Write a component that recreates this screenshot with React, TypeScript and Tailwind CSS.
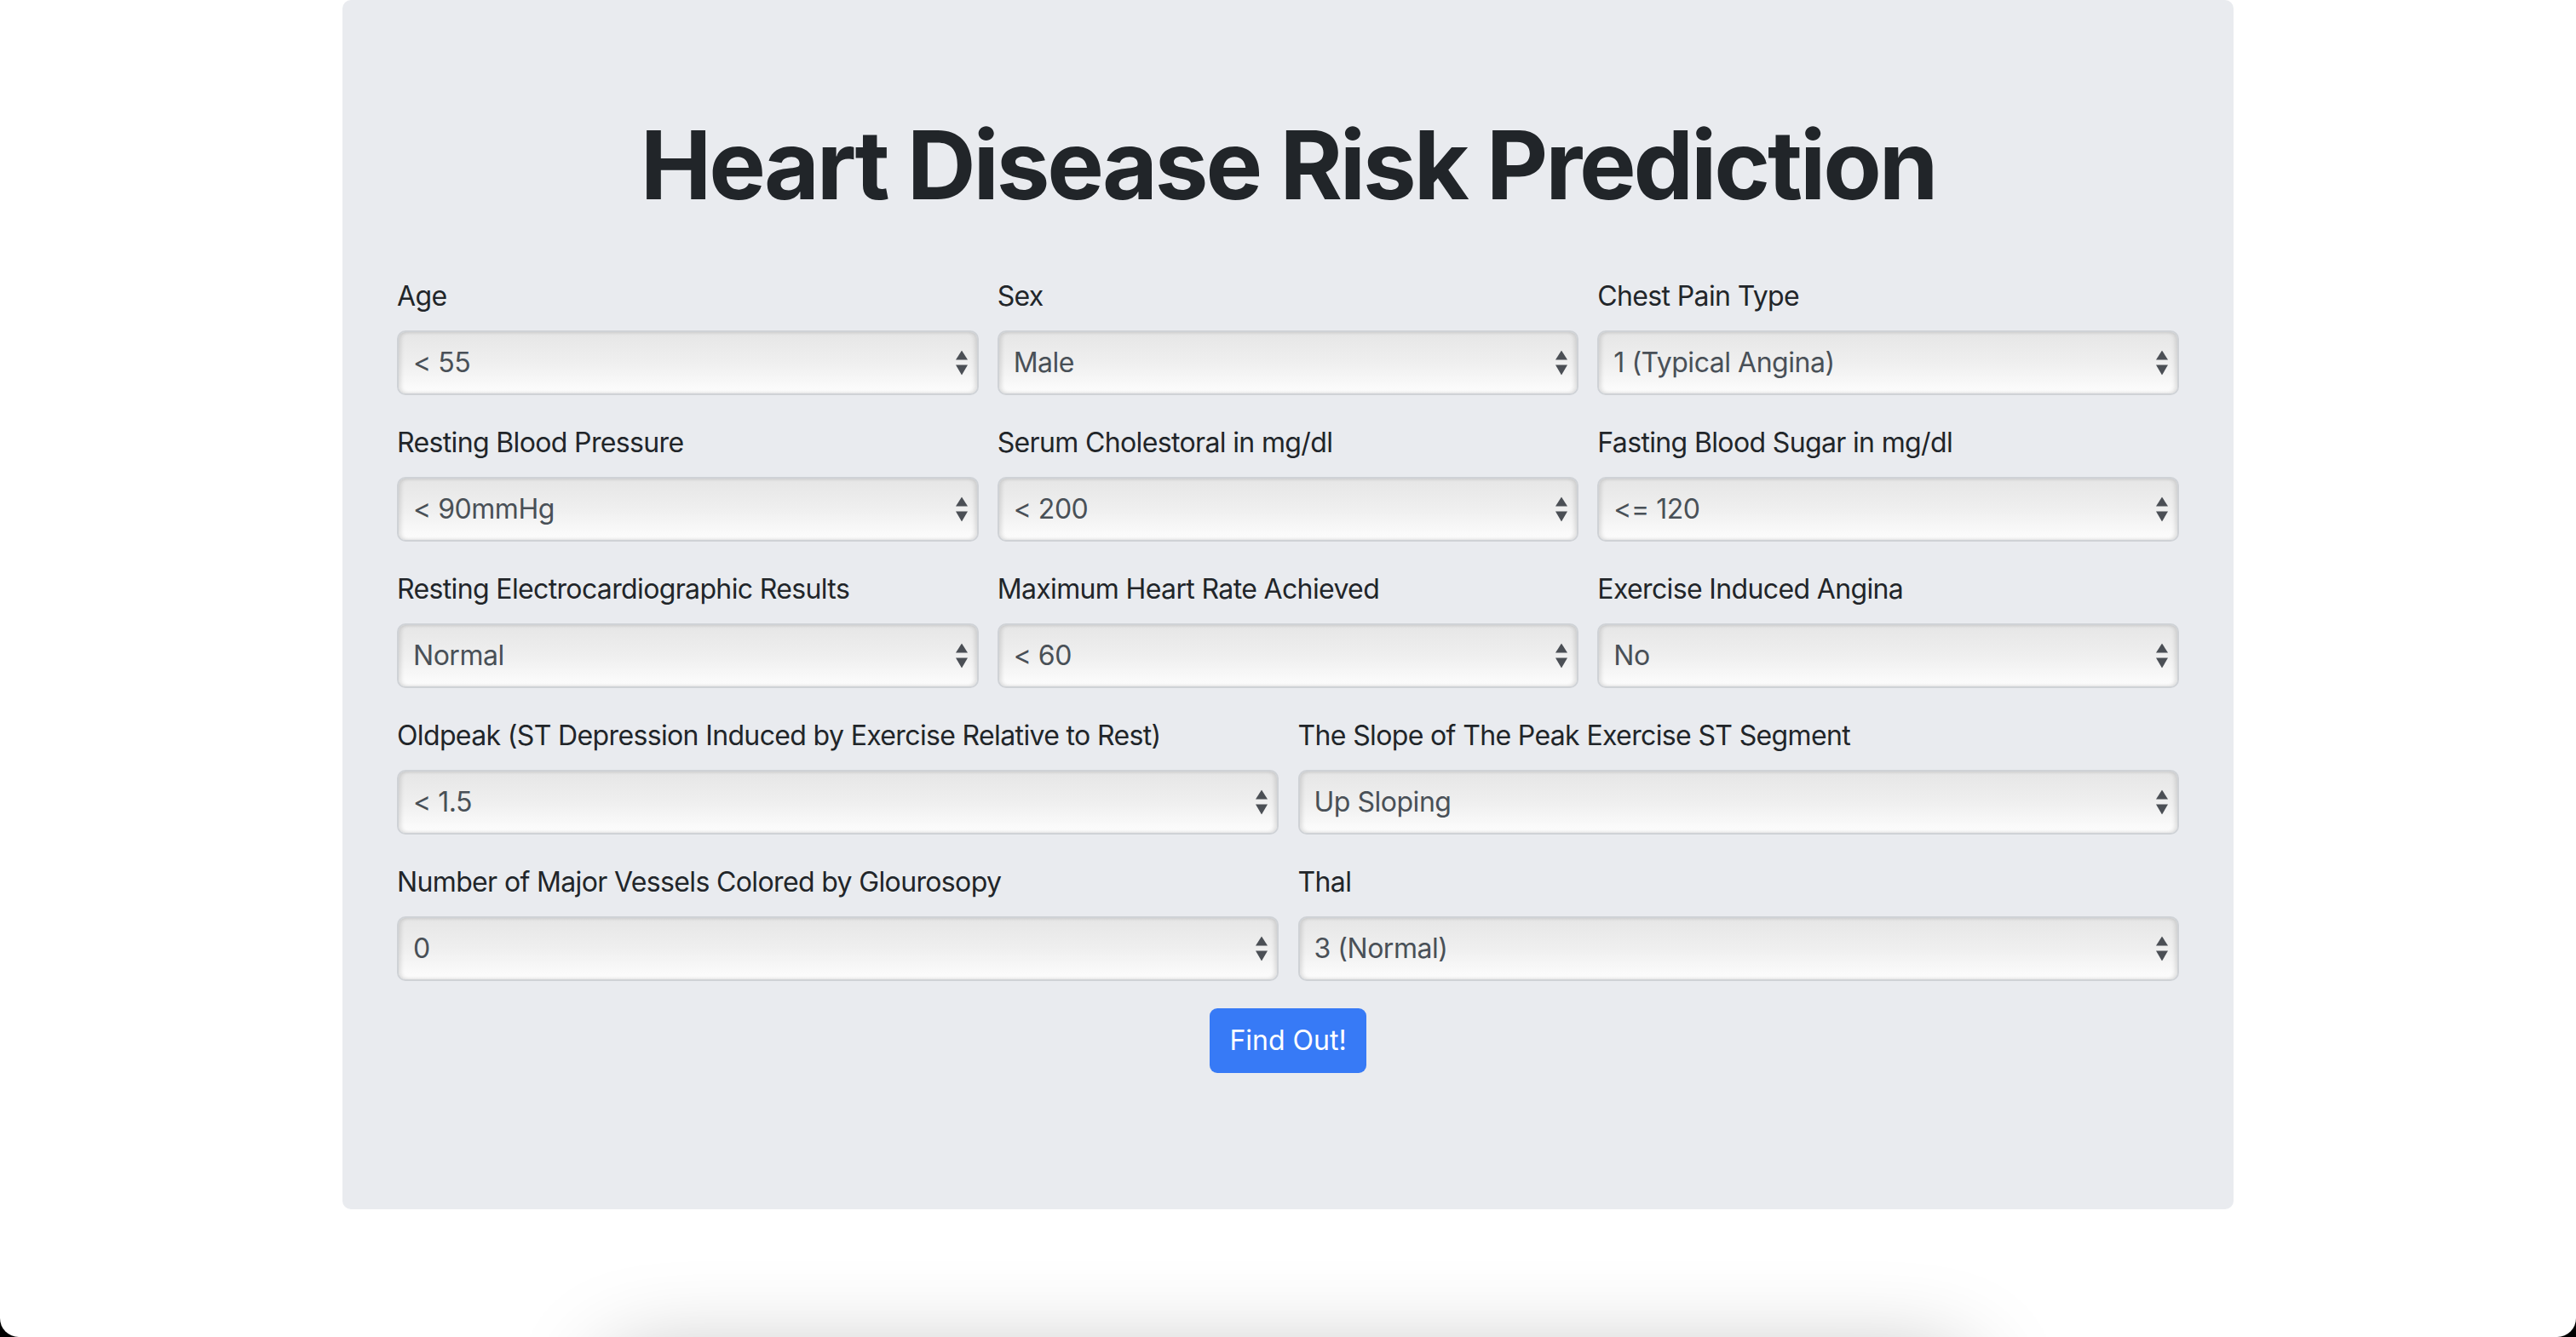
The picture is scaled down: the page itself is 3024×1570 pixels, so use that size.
import { useState } from "react";

interface Field {
  label: string;
  name: string;
  options: string[];
}

const topFields: Field[] = [
  { label: "Age", name: "age", options: ["< 55", "55 - 65", "> 65"] },
  { label: "Sex", name: "sex", options: ["Male", "Female"] },
  {
    label: "Chest Pain Type",
    name: "cp",
    options: ["1 (Typical Angina)", "2 (Atypical Angina)", "3 (Non-Anginal Pain)", "4 (Asymptomatic)"],
  },
  { label: "Resting Blood Pressure", name: "trestbps", options: ["< 90mmHg", "90 - 120mmHg", "> 120mmHg"] },
  { label: "Serum Cholestoral in mg/dl", name: "chol", options: ["< 200", "200 - 240", "> 240"] },
  { label: "Fasting Blood Sugar in mg/dl", name: "fbs", options: ["<= 120", "> 120"] },
  {
    label: "Resting Electrocardiographic Results",
    name: "restecg",
    options: ["Normal", "ST-T Wave Abnormality", "Left Ventricular Hypertrophy"],
  },
  { label: "Maximum Heart Rate Achieved", name: "thalach", options: ["< 60", "60 - 100", "> 100"] },
  { label: "Exercise Induced Angina", name: "exang", options: ["No", "Yes"] },
];

const bottomFields: Field[] = [
  {
    label: "Oldpeak (ST Depression Induced by Exercise Relative to Rest)",
    name: "oldpeak",
    options: ["< 1.5", "1.5 - 2.5", "> 2.5"],
  },
  {
    label: "The Slope of The Peak Exercise ST Segment",
    name: "slope",
    options: ["Up Sloping", "Flat", "Down Sloping"],
  },
  {
    label: "Number of Major Vessels Colored by Glourosopy",
    name: "ca",
    options: ["0", "1", "2", "3"],
  },
  { label: "Thal", name: "thal", options: ["3 (Normal)", "6 (Fixed Defect)", "7 (Reversible Defect)"] },
];

function SelectField({ field }: { field: Field }) {
  const [value, setValue] = useState(field.options[0]);

  return (
    <div className="mb-8">
      <label
        htmlFor={field.name}
        className="block mb-4 text-[32px] leading-[48px] tracking-[-0.02em] text-[#212529]"
      >
        {field.label}
      </label>
      <div className="relative">
        <select
          id={field.name}
          value={value}
          onChange={(e) => setValue(e.target.value)}
          className="block w-full h-[76px] appearance-none rounded-[10px] border-2 border-[#cfd2d6] bg-gradient-to-b from-[#e6e6e6] via-[#efefef] to-[#fdfdfd] pl-[17px] pr-12 text-[32px] tracking-[-0.015em] text-[#495057] shadow-[inset_3px_0_4px_rgba(0,0,0,0.10),inset_-3px_0_4px_rgba(0,0,0,0.10)] outline-none"
        >
          {field.options.map((opt) => (
            <option key={opt}>{opt}</option>
          ))}
        </select>
        {/* up/down arrows */}
        <svg
          width="14"
          height="29"
          viewBox="0 0 14 29"
          className="pointer-events-none absolute right-[13px] top-1/2 -translate-y-1/2"
        >
          <polygon points="7,0 14,11 0,11" fill="#4b4f55" />
          <polygon points="0,17 14,17 7,29" fill="#4b4f55" />
        </svg>
      </div>
    </div>
  );
}

export default function App() {
  return (
    <div className="h-[1570px] bg-black font-['Inter','Liberation_Sans',sans-serif]">
      <div className="h-full overflow-hidden rounded-b-[22px] bg-white">
        {/* Jumbotron */}
        <div className="mx-auto w-[2220px] rounded-[10px] bg-[#e9ebef] px-16 pt-[126px] pb-[160px]">
          <h1 className="mb-16 text-center text-[112px] font-bold leading-[1.2] tracking-[-0.028em] text-[#212529]">
            Heart Disease Risk Prediction
          </h1>

          <form onSubmit={(e) => e.preventDefault()}>
            <div className="grid grid-cols-3 gap-x-[22px]">
              {topFields.map((f) => (
                <SelectField key={f.name} field={f} />
              ))}
            </div>
            <div className="grid grid-cols-2 gap-x-[23px]">
              {bottomFields.map((f) => (
                <SelectField key={f.name} field={f} />
              ))}
            </div>
            <div className="flex justify-center">
              <button
                type="submit"
                className="h-[76px] w-[184px] rounded-[9px] bg-[#377af6] text-[32px] text-white"
              >
                Find Out!
              </button>
            </div>
          </form>
        </div>

        {/* next section peeking below the fold */}
        <div className="mx-auto mt-[175px] h-[400px] w-[1600px] rounded-[40px] bg-white shadow-[0_0_110px_rgba(0,0,0,0.28)]" />
      </div>
    </div>
  );
}
